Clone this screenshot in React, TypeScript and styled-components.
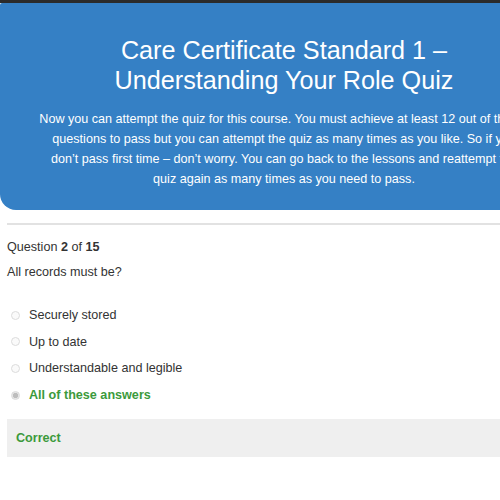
import React from "react";
import styled, { createGlobalStyle } from "styled-components";

const GlobalStyle = createGlobalStyle`
	html, body {
		margin: 0;
		padding: 0;
		background: #fff;
		overflow: hidden;
	}
	body {
		font-family: "Liberation Sans", Arial, sans-serif;
		color: #333;
	}
`;

const TopBar = styled.div`
	height: 3px;
	background: #2b2b2b;
`;

const Page = styled.div`
	width: 568px;
`;

const Banner = styled.header`
	background: #3580c5;
	color: #fff;
	border-radius: 2px 0 0 16px;
	padding: 32px 38px 21px;
	text-align: center;
`;

const Title = styled.h1`
	margin: 0 0 14px;
	font-size: 25.2px;
	font-weight: 400;
	line-height: 30px;
`;

const Intro = styled.p`
	margin: 0;
	font-size: 12.6px;
	line-height: 20px;
`;

const Divider = styled.hr`
	margin: 13px 0 0 7px;
	border: 0;
	height: 2px;
	background: #e2e2e2;
`;

const Quiz = styled.section`
	padding: 13px 0 0 7px;
	font-size: 12.6px;
`;

const Counter = styled.div`
	line-height: 18px;
	b {
		font-weight: 700;
	}
`;

const Prompt = styled.div`
	margin-top: 7px;
	line-height: 18px;
`;

const Options = styled.ul`
	list-style: none;
	margin: 25px 0 0;
	padding: 0;
	display: flex;
	flex-direction: column;
	gap: 8.7px;
`;

const Option = styled.li<{ $correct?: boolean }>`
	display: flex;
	align-items: center;
	gap: 9px;
	height: 18px;
	padding-left: 4px;
	color: ${(p) => (p.$correct ? "#3c9a3c" : "#333")};
	font-weight: ${(p) => (p.$correct ? 700 : 400)};
`;

const Radio = styled.span<{ $checked?: boolean }>`
	width: 7px;
	height: 7px;
	border-radius: 50%;
	border: 1px solid #dcdcdc;
	background: ${(p) => (p.$checked ? "radial-gradient(circle, #bdbdbd 45%, #e6e6e6 60%)" : "#fafafa")};
	flex-shrink: 0;
`;

const Result = styled.div`
	margin-top: 15px;
	background: #efefef;
	height: 38px;
	display: flex;
	align-items: center;
	padding-left: 9px;
	color: #3c9a3c;
	font-weight: 700;
`;

const answers = [
	{ text: "Securely stored" },
	{ text: "Up to date" },
	{ text: "Understandable and legible" },
	{ text: "All of these answers", correct: true },
];

export default function App() {
	return (
		<>
			<GlobalStyle />
			<TopBar />
			<Page>
				<Banner>
					<Title>
						Care Certificate Standard 1 –<br />
						Understanding Your Role Quiz
					</Title>
					<Intro>
						Now you can attempt the quiz for this course. You must achieve at least 12 out of the 15
						questions to pass but you can attempt the quiz as many times as you like. So if you
						don’t pass first time – don’t worry. You can go back to the lessons and reattempt the
						quiz again as many times as you need to pass.
					</Intro>
				</Banner>
				<Divider />
				<Quiz>
					<Counter>
						Question <b>2</b> of <b>15</b>
					</Counter>
					<Prompt>All records must be?</Prompt>
					<Options>
						{answers.map((a) => (
							<Option key={a.text} $correct={a.correct}>
								<Radio $checked={a.correct} />
								{a.text}
							</Option>
						))}
					</Options>
					<Result>Correct</Result>
				</Quiz>
			</Page>
		</>
	);
}
